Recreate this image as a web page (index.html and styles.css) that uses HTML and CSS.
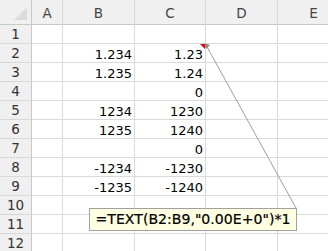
FILE: index.html
```html
<!DOCTYPE html>
<html>
<head>
<meta charset="utf-8">
<link rel="stylesheet" href="styles.css">
</head>
<body>
<div class="sheet">
  <div class="grid">
    <div class="corner"><span class="tri"></span></div>
    <div class="ch">A</div><div class="ch">B</div><div class="ch">C</div><div class="ch">D</div><div class="ch last">E</div>

    <div class="rh">1</div><div class="c"></div><div class="c"></div><div class="c"></div><div class="c"></div><div class="c"></div>
    <div class="rh">2</div><div class="c"></div><div class="c num">1.234</div><div class="c num note">1.23<span class="flag"></span></div><div class="c"></div><div class="c"></div>
    <div class="rh">3</div><div class="c"></div><div class="c num">1.235</div><div class="c num">1.24</div><div class="c"></div><div class="c"></div>
    <div class="rh">4</div><div class="c"></div><div class="c num"></div><div class="c num">0</div><div class="c"></div><div class="c"></div>
    <div class="rh">5</div><div class="c"></div><div class="c num">1234</div><div class="c num">1230</div><div class="c"></div><div class="c"></div>
    <div class="rh">6</div><div class="c"></div><div class="c num">1235</div><div class="c num">1240</div><div class="c"></div><div class="c"></div>
    <div class="rh">7</div><div class="c"></div><div class="c num"></div><div class="c num">0</div><div class="c"></div><div class="c"></div>
    <div class="rh">8</div><div class="c"></div><div class="c num">-1234</div><div class="c num">-1230</div><div class="c"></div><div class="c"></div>
    <div class="rh">9</div><div class="c"></div><div class="c num">-1235</div><div class="c num">-1240</div><div class="c"></div><div class="c"></div>
    <div class="rh">10</div><div class="c"></div><div class="c"></div><div class="c"></div><div class="c"></div><div class="c"></div>
    <div class="rh">11</div><div class="c"></div><div class="c"></div><div class="c"></div><div class="c"></div><div class="c"></div>
    <div class="rh">12</div><div class="c"></div><div class="c"></div><div class="c"></div><div class="c"></div><div class="c"></div>
  </div>
  <svg class="leader" width="328" height="251" viewBox="0 0 328 251">
    <line x1="206" y1="45" x2="296" y2="208" stroke="#a0a0a0" stroke-width="1"/>
    <polygon points="204,43 210,45 206,49" fill="#8a8a8a"/>
  </svg>
  <div class="callout">=TEXT(B2:B9,"0.00E+0")*1</div>
</div>
</body>
</html>
```
FILE: styles.css
```css
html, body {
  margin: 0;
  padding: 0;
  background: #ffffff;
}
.sheet {
  position: relative;
  width: 328px;
  height: 251px;
  overflow: hidden;
}
.grid {
  display: grid;
  grid-template-columns: 32px 31px 72px 71px 72px 72px;
  grid-template-rows: 25px repeat(12, 19px);
  font-family: "DejaVu Sans", Verdana, sans-serif;
  font-size: 13px;
  color: #000;
}
.corner {
  position: relative;
  background: #f0f0f0;
  border-right: 1px solid #c8c8c8;
  border-bottom: 1px solid #c8c8c8;
}
.tri {
  position: absolute;
  right: 4px;
  bottom: 4px;
  width: 0;
  height: 0;
  border-left: 13px solid transparent;
  border-bottom: 13px solid #dcdcdc;
}
.ch {
  background: #f0f0f0;
  border-right: 1px solid #d8d8d8;
  border-bottom: 1px solid #c8c8c8;
  display: flex;
  align-items: center;
  justify-content: center;
  color: #444444;
  font-size: 13.5px;
  padding-top: 1px;
}
.rh {
  background: #f0f0f0;
  border-right: 1px solid #c8c8c8;
  border-bottom: 1px solid #d8d8d8;
  display: flex;
  align-items: center;
  justify-content: center;
  color: #333333;
  font-size: 13.5px;
}
.c {
  border-right: 1px solid #dadada;
  border-bottom: 1px solid #dadada;
  display: flex;
  align-items: center;
  justify-content: flex-end;
  padding-right: 2px;
  padding-top: 2px;
  position: relative;
}
.flag {
  position: absolute;
  top: 0;
  right: 0;
  width: 0;
  height: 0;
  border-top: 5px solid #e00000;
  border-left: 5px solid transparent;
}
.leader {
  position: absolute;
  left: 0;
  top: 0;
  pointer-events: none;
}
.callout {
  position: absolute;
  left: 89px;
  top: 208px;
  width: 206px;
  height: 21px;
  box-sizing: content-box;
  background: #ffffe1;
  border: 1px solid #a0a0a0;
  font-family: "DejaVu Sans", Verdana, sans-serif;
  font-size: 14.1px;
  line-height: 21px;
  color: #000;
  display: flex;
  align-items: center;
  justify-content: center;
  white-space: nowrap;
  -webkit-text-stroke: 0.2px #000;
}
```
